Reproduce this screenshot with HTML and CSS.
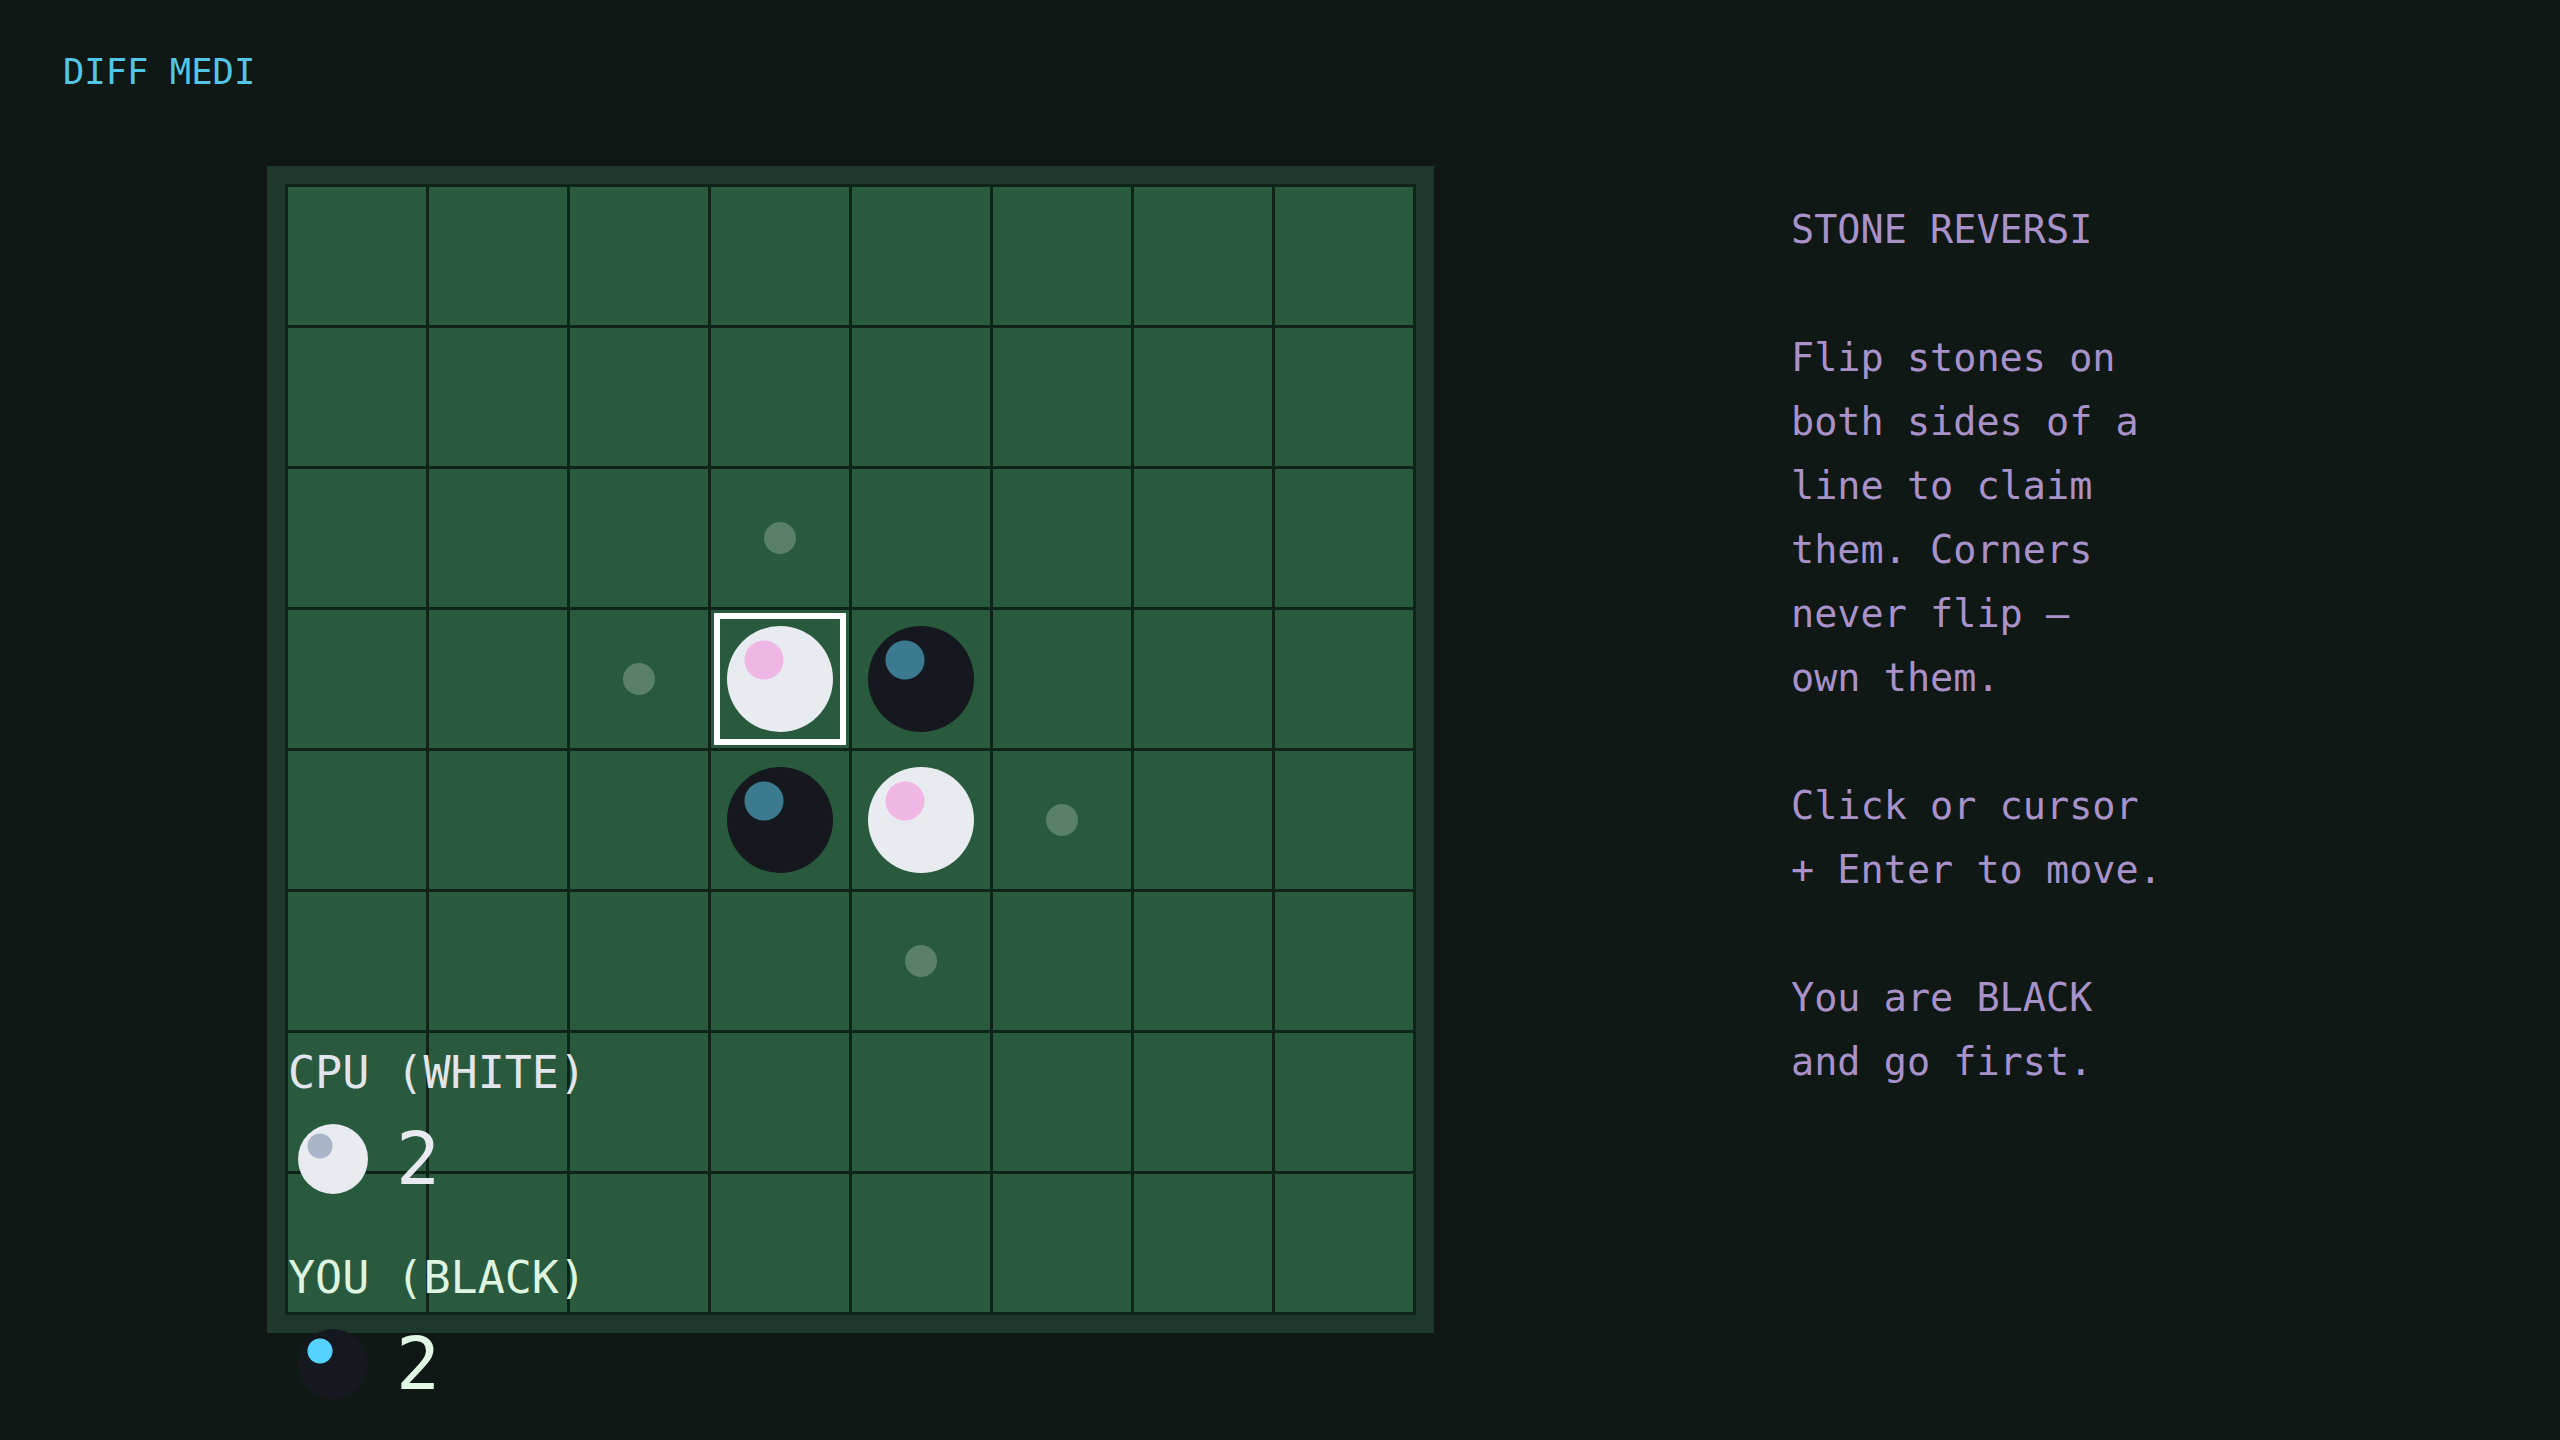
FILE: index.html
```html
<!DOCTYPE html>
<html lang="en">
<head>
<meta charset="utf-8">
<title>Stone Reversi</title>
<link rel="stylesheet" href="styles.css">
</head>
<body>
<div class="app">
  <div class="hud">DIFF MEDI</div>
  <div class="main">
    <div class="board-wrap">
      <div class="board">
        <div class="grid">
          <div class="cell"></div><div class="cell"></div><div class="cell"></div><div class="cell"></div><div class="cell"></div><div class="cell"></div><div class="cell"></div><div class="cell"></div>
          <div class="cell"></div><div class="cell"></div><div class="cell"></div><div class="cell"></div><div class="cell"></div><div class="cell"></div><div class="cell"></div><div class="cell"></div>
          <div class="cell"></div><div class="cell"></div><div class="cell"></div><div class="cell"><span class="hint"></span></div><div class="cell"></div><div class="cell"></div><div class="cell"></div><div class="cell"></div>
          <div class="cell"></div><div class="cell"></div><div class="cell"><span class="hint"></span></div><div class="cell cursor"><span class="stone white"></span></div><div class="cell"><span class="stone black"></span></div><div class="cell"></div><div class="cell"></div><div class="cell"></div>
          <div class="cell"></div><div class="cell"></div><div class="cell"></div><div class="cell"><span class="stone black"></span></div><div class="cell"><span class="stone white"></span></div><div class="cell"><span class="hint"></span></div><div class="cell"></div><div class="cell"></div>
          <div class="cell"></div><div class="cell"></div><div class="cell"></div><div class="cell"></div><div class="cell"><span class="hint"></span></div><div class="cell"></div><div class="cell"></div><div class="cell"></div>
          <div class="cell"></div><div class="cell"></div><div class="cell"></div><div class="cell"></div><div class="cell"></div><div class="cell"></div><div class="cell"></div><div class="cell"></div>
          <div class="cell"></div><div class="cell"></div><div class="cell"></div><div class="cell"></div><div class="cell"></div><div class="cell"></div><div class="cell"></div><div class="cell"></div>
        </div>
      </div>
      <div class="scores">
        <div class="player cpu">
          <div class="player-label">CPU (WHITE)</div>
          <div class="player-row">
            <span class="mini white"></span>
            <span class="count">2</span>
          </div>
        </div>
        <div class="player you">
          <div class="player-label">YOU (BLACK)</div>
          <div class="player-row">
            <span class="mini black"></span>
            <span class="count">2</span>
          </div>
        </div>
      </div>
    </div>
    <aside class="info">
      <p>STONE REVERSI</p>
      <p>Flip stones on<br>both sides of a<br>line to claim<br>them. Corners<br>never flip —<br>own them.</p>
      <p>Click or cursor<br>+ Enter to move.</p>
      <p>You are BLACK<br>and go first.</p>
    </aside>
  </div>
</div>
</body>
</html>
```
FILE: styles.css
```css
* { box-sizing: border-box; }

html, body {
  margin: 0;
  padding: 0;
  background: #0f1814;
  font-family: "DejaVu Sans Mono", "Liberation Mono", monospace;
}

.app {
  width: 2560px;
  height: 1440px;
  overflow: hidden;
}

.hud {
  padding: 52px 0 0 63px;
  font-size: 35.5px;
  line-height: 40px;
  color: #52c6e6;
}

.main {
  display: flex;
  align-items: flex-start;
  padding-left: 267px;
  margin-top: 74px;
}

.board-wrap {
  position: relative;
}

.board {
  background: #1e382b;
  padding: 18px;
}

.grid {
  display: grid;
  grid-template-columns: repeat(8, 138px);
  grid-auto-rows: 138px;
  gap: 3px;
  padding: 3px;
  background: #0f2418;
}

.cell {
  background: #295a3e;
  display: flex;
  align-items: center;
  justify-content: center;
}

.cell.cursor {
  outline: 6px solid #ffffff;
  outline-offset: -9px;
}

.hint {
  width: 32px;
  height: 32px;
  border-radius: 50%;
  background: rgba(255, 255, 255, 0.23);
}

.stone {
  width: 106px;
  height: 106px;
  border-radius: 50%;
}

.stone.white {
  background: radial-gradient(circle at 37px 34px, #f0b7e4 19px, rgba(240, 183, 228, 0) 20px), #e8ebf0;
}

.stone.black {
  background: radial-gradient(circle at 37px 34px, #3c7a8f 19px, rgba(60, 122, 143, 0) 20px), #15181e;
}

.scores {
  position: absolute;
  left: 21px;
  top: 880px;
}

.player + .player {
  margin-top: 57px;
}

.player-label {
  font-size: 45px;
  line-height: 53px;
  white-space: nowrap;
}

.cpu .player-label { color: #e3e5ec; }
.you .player-label { color: #def5e0; }

.player-row {
  display: flex;
  align-items: center;
  gap: 28px;
  margin-top: 25px;
  padding-left: 10px;
  height: 70px;
}

.mini {
  width: 70px;
  height: 70px;
  border-radius: 50%;
  flex: none;
}

.mini.white {
  background: radial-gradient(circle at 22px 22px, #a9b4c8 12px, rgba(169, 180, 200, 0) 13px), #e8ebf0;
}

.mini.black {
  background: radial-gradient(circle at 22px 22px, #55d2ff 12px, rgba(85, 210, 255, 0) 13px), #15181e;
}

.count {
  font-size: 73px;
  line-height: 70px;
}

.cpu .count { color: #e8eaf0; }
.you .count { color: #e0f7e4; }

.info {
  margin-left: 357px;
  margin-top: 32px;
  font-size: 38.5px;
  line-height: 64px;
  color: #a892c9;
  white-space: nowrap;
}

.info p {
  margin: 0 0 64px 0;
}
```
